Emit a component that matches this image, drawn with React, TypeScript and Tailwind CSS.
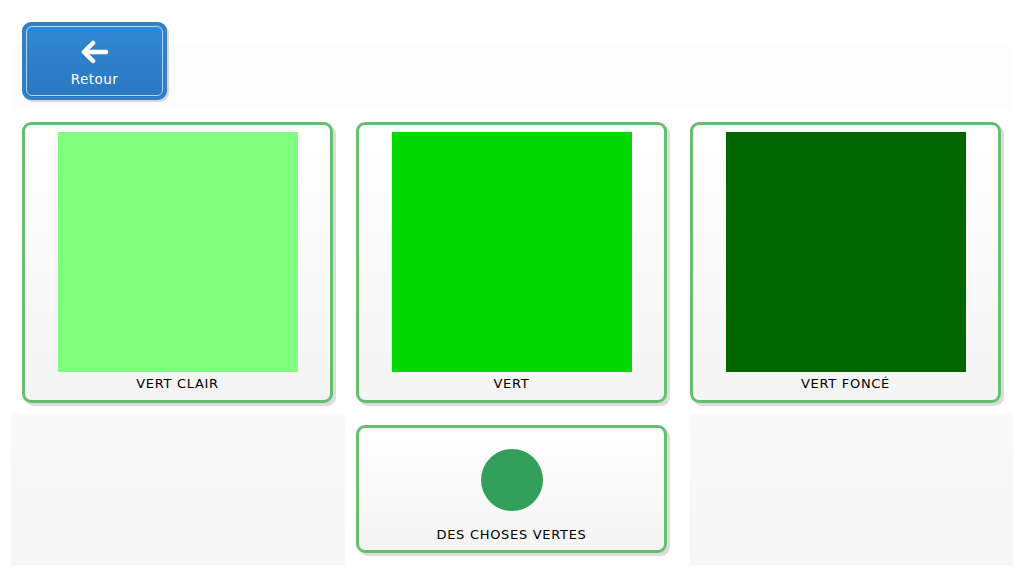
import React from "react";

type Swatch = {
  label: string;
  color: string;
};

const swatches: Swatch[] = [
  { label: "VERT CLAIR", color: "bg-[#80ff7e]" },
  { label: "VERT", color: "bg-[#00d800]" },
  { label: "VERT FONCÉ", color: "bg-[#006600]" },
];

function Card({ children, className }: { children: React.ReactNode; className: string }) {
  return (
    <div
      className={`rounded-[9px] border-[3px] border-[#66bf6e] bg-gradient-to-b from-white to-[#f4f4f4] shadow-[3px_3px_0_#dcdcdc] flex flex-col items-center ${className}`}
    >
      {children}
    </div>
  );
}

export default function App() {
  return (
    <main
      className="w-[1024px] h-[576px] bg-white px-[11px] pt-[44px] text-black overflow-hidden"
      style={{ fontFamily: '"Comic Sans MS", "DejaVu Sans", sans-serif' }}
    >
      {/* TOP BAR */}
      <div className="relative h-[66px] w-[1002px] bg-[#fdfdfd]">
        <button className="absolute left-[11px] top-[-22px] w-[145px] h-[78px] rounded-[9px] border-[3px] border-[#2d80ca] bg-gradient-to-b from-[#3189d3] to-[#2a77c0] shadow-[2px_2px_0_#d8d8d8] p-px">
          <div className="w-full h-full rounded-[6px] border border-[#b3d3f0] flex flex-col items-center justify-center pt-[4px]">
            <svg width="30" height="24" viewBox="0 0 30 24" className="mb-[9px]">
              <path
                d="M13 3 L4 12 L13 21 M4.5 12 H26"
                fill="none"
                stroke="white"
                strokeWidth="4.5"
                strokeLinecap="round"
                strokeLinejoin="round"
              />
            </svg>
            <span className="text-white text-[13.5px] leading-none tracking-[0.5px]">Retour</span>
          </div>
        </button>
      </div>

      {/* GRID */}
      <div className="grid grid-cols-[334px_334px_334px] grid-rows-[304px_151px]">
        {swatches.map((s) => (
          <div key={s.label} className="pl-[11px] pr-[12px] pt-[12px] pb-[11px]">
            <Card className="w-full h-full pt-[7px]">
              <div className={`w-[240px] h-[240px] ${s.color}`} />
              <span className="mt-[4px] text-[13px] leading-[16px] tracking-[0.7px]">{s.label}</span>
            </Card>
          </div>
        ))}

        <div className="bg-gradient-to-b from-[#f9f9f9] to-[#f6f6f6]" />

        <div className="pl-[11px] pr-[12px] pt-[11px] pb-[12px]">
          <Card className="w-full h-full pt-[21px]">
            <div className="w-[62px] h-[62px] rounded-full bg-[#32a05a]" />
            <span className="mt-[16px] text-[13px] leading-[16px] tracking-[0.7px]">DES CHOSES VERTES</span>
          </Card>
        </div>

        <div className="ml-[11px] bg-gradient-to-b from-[#f9f9f9] to-[#f6f6f6]" />
      </div>
    </main>
  );
}
